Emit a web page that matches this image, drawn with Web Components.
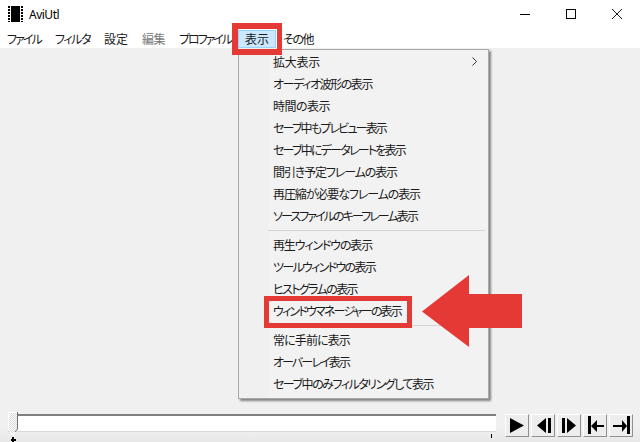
<!DOCTYPE html>
<html lang="ja">
<head>
<meta charset="utf-8">
<title>AviUtl</title>
<style>
  html, body { margin: 0; height: 100%; overflow: hidden; }
  body {
    font-family: "Noto Sans CJK JP", "Noto Sans", sans-serif;
    font-size: 12px;
    font-feature-settings: "palt";
    color: #1a1a1a;
  }
</style>
</head>
<body>
<aviutl-window>
  <title-bar slot="title">AviUtl</title-bar>
  <menu-bar slot="menu">
    <menu-top w="34">ファイル</menu-top>
    <menu-top w="35">フィルタ</menu-top>
    <menu-top w="24">設定</menu-top>
    <menu-top w="23" disabled>編集</menu-top>
    <menu-top w="52">プロファイル</menu-top>
    <menu-top w="24" open>表示</menu-top>
    <menu-top w="30">その他</menu-top>
  </menu-bar>
  <popup-menu slot="client">
    <menu-item w="47" arrow>拡大表示</menu-item>
    <menu-item w="99">オーディオ波形の表示</menu-item>
    <menu-item w="57">時間の表示</menu-item>
    <menu-item w="113">セーブ中もプレビュー表示</menu-item>
    <menu-item w="132">セーブ中にデータレートを表示</menu-item>
    <menu-item w="124">間引き予定フレームの表示</menu-item>
    <menu-item w="147">再圧縮が必要なフレームの表示</menu-item>
    <menu-item w="144">ソースファイルのキーフレーム表示</menu-item>
    <menu-sep></menu-sep>
    <menu-item w="99">再生ウィンドウの表示</menu-item>
    <menu-item w="102">ツールウィンドウの表示</menu-item>
    <menu-item w="84">ヒストグラムの表示</menu-item>
    <menu-item w="128" marked>ウィンドウマネージャーの表示</menu-item>
    <menu-sep></menu-sep>
    <menu-item w="77">常に手前に表示</menu-item>
    <menu-item w="76">オーバーレイ表示</menu-item>
    <menu-item w="160">セーブ中のみフィルタリングして表示</menu-item>
  </popup-menu>
  <red-arrow slot="client"></red-arrow>
  <seek-bar slot="footer"></seek-bar>
  <transport-buttons slot="footer"></transport-buttons>
</aviutl-window>

<script>
// small helper, every element just sets its shadow html once
class Base extends HTMLElement {
  constructor() {
    super();
    this.attachShadow({ mode: 'open' });
  }
  connectedCallback() {
    this.shadowRoot.innerHTML = this.html();
    this.fitText();
  }
  // the original menu font has narrow kana, squeeze each label to its width
  fitText() {
    const box = this.shadowRoot.querySelector('.label');
    const w = Number(this.getAttribute('w'));
    if (!box || !w) return;
    const n = this.textContent.trim().length;
    const spare = w - box.getBoundingClientRect().width;
    box.style.letterSpacing = (spare / n) + 'px';
  }
}

customElements.define('aviutl-window', class extends Base {
  html() {
    return `
      <style>
        :host { display: flex; flex-direction: column; width: 640px; height: 442px; background: #fff; }
        .client { flex: 1; position: relative; background: #f0f0f0; display: flex; flex-direction: column; justify-content: flex-end; }
        .footer { display: flex; align-items: flex-start; gap: 9px; padding: 0 7px 5px 8px; height: 23px;
                  background: linear-gradient(#f0f0f0, #f0f0f0 14px, #e8e8e8); }
      </style>
      <slot name="title"></slot>
      <slot name="menu"></slot>
      <div class="client">
        <slot name="client"></slot>
        <div class="footer"><slot name="footer"></slot></div>
      </div>`;
  }
});

customElements.define('title-bar', class extends Base {
  html() {
    return `
      <style>
        :host { display: flex; align-items: center; height: 30px; flex: none; font-family: "Noto Sans", sans-serif; font-size: 12px; font-feature-settings: normal; }
        .icon { margin-left: 8px; width: 15px; height: 16px; margin-right: 6px; margin-top: -2px; }
        .text { flex: 1; color: #000; letter-spacing: -.5px; margin-top: -1px; }
        .caption { width: 46px; height: 28px; align-self: flex-start; display: flex; align-items: center; justify-content: center; }
      </style>
      <svg class="icon" viewBox="0 0 15 16">
        <rect x="3" y="0" width="9" height="16" fill="#000"/>
        <path d="M1 0v16M14 0v16" stroke="#000" stroke-width="2" stroke-dasharray="2 1" fill="none"/>
      </svg>
      <span class="text"><slot></slot></span>
      <span class="caption"><svg width="10" height="10"><path d="M0 5.5h10" stroke="#000"/></svg></span>
      <span class="caption"><svg width="10" height="10"><rect x=".5" y=".5" width="9" height="9" fill="none" stroke="#000"/></svg></span>
      <span class="caption"><svg width="10" height="10"><path d="M0 0l10 10M10 0l-10 10" stroke="#000" stroke-width=".9"/></svg></span>`;
  }
});

customElements.define('menu-bar', class extends Base {
  html() {
    return `
      <style>
        :host { display: flex; height: 18px; flex: none; background: #fff; }
      </style>
      <slot></slot>`;
  }
});

customElements.define('menu-top', class extends Base {
  html() {
    return `
      <style>
        :host { display: block; position: relative; height: 18px; line-height: 18px; padding: 0 7px; white-space: nowrap; }
        :host([disabled]) { color: #7a7a7a; }
        :host([open]) { background: #cce8ff; box-shadow: inset 0 0 0 1px #99d1ff; z-index: 3; }
        :host([open])::after { content: ""; position: absolute; left: -6px; right: -6px; top: -7px; bottom: -7px;
                               border: solid #e53935; border-width: 6px 5px 6px 6px; pointer-events: none; }
        .label { display: inline-block; }
      </style>
      <span class="label"><slot></slot></span>`;
  }
});

customElements.define('popup-menu', class extends Base {
  html() {
    return `
      <style>
        :host { position: absolute; left: 238px; top: 1px; width: 249px; padding: 2px 0; display: block; z-index: 2;
                background: linear-gradient(90deg, #f0f0f0 30px, #f2f2f2 30px); border: 1px solid #a8a8a8;
                box-shadow: 2px 2px 2px rgba(0,0,0,.45); }
      </style>
      <slot></slot>`;
  }
});

customElements.define('menu-item', class extends Base {
  html() {
    const arrow = this.hasAttribute('arrow')
      ? '<svg class="arrow" width="5" height="9"><path d="M.5 .5l4 4-4 4" fill="none" stroke="#333"/></svg>'
      : '';
    return `
      <style>
        :host { display: flex; align-items: center; position: relative; box-sizing: border-box; height: 22px; padding: 0 0 4px 34px; white-space: nowrap; }
        .arrow { position: absolute; right: 11px; top: 5px; }
        .label { display: inline-block; }
        :host([marked])::after { content: ""; position: absolute; left: 25px; top: -5px; width: 138px; height: 22px;
                                 border: 5px solid #e53935; }
      </style>
      <span class="label"><slot></slot></span>${arrow}`;
  }
});

customElements.define('menu-sep', class extends Base {
  html() {
    return `
      <style>
        :host { display: block; height: 7px; padding-top: 2px; box-sizing: border-box; }
        div { height: 1px; margin-left: 29px; margin-right: 3px; background: #d5d5d5; }
      </style>
      <div></div>`;
  }
});

customElements.define('red-arrow', class extends Base {
  html() {
    return `
      <style>
        :host { position: absolute; left: 422px; top: 227px; width: 100px; height: 72px; display: block; z-index: 4; }
        svg { display: block; }
      </style>
      <svg width="100" height="72"><path d="M0 36.5L47 0V19H100V53H47V72Z" fill="#e53935"/></svg>`;
  }
});

customElements.define('seek-bar', class extends Base {
  html() {
    return `
      <style>
        :host { display: block; position: relative; width: 488px; height: 18px; box-sizing: border-box;
                background: #fff; border-top: 2px solid #808080; border-bottom: 1px solid #d8d8d8; }
        .thumb { position: absolute; left: 0; top: -4px; }
        .tick { position: absolute; top: 21px; width: 2px; height: 5px; background: #000; }
        .cross { position: absolute; left: 3px; top: 23px; width: 5px; height: 2px; background: #000; }
        .end { position: absolute; right: 4px; top: 18px; width: 1px; height: 4px; background: #000; }
      </style>
      <svg class="thumb" width="11" height="24" viewBox="0 0 11 24">
        <defs>
          <pattern id="dots" width="2" height="2" patternUnits="userSpaceOnUse">
            <rect width="2" height="2" fill="#fff"/>
            <rect width="1" height="1" fill="#d8d8d8"/>
            <rect x="1" y="1" width="1" height="1" fill="#d8d8d8"/>
          </pattern>
        </defs>
        <path d="M.5 .5H9.5V17L5 23 .5 17Z" fill="url(#dots)" stroke="#fff"/>
        <path d="M9.5 0V17L7 20" fill="none" stroke="#707070"/>
      </svg>
      <i class="tick" style="left:4px"></i>
      <i class="cross"></i>
      <i class="end"></i>`;
  }
});

customElements.define('transport-buttons', class extends Base {
  html() {
    const icons = [
      'M5 4L19 11.5 5 19Z',
      'M15 4V19L6 11.5ZM17 4h3v15h-3Z',
      'M5 4h3v15H5ZM10 4l9 7.5-9 7.5Z',
      'M5 2h3v18H5ZM8 12l6-6v5h7v2h-7v5Z',
      'M18 2h3v18h-3ZM18 12l-5-6v5H4v2h9v5Z'
    ];
    return `
      <style>
        :host { display: flex; gap: 2px; }
        svg { display: block; width: 24px; height: 23px; background: #ededed;
              box-sizing: border-box;
              border: 1px solid; border-color: #fff #909090 #909090 #fff; }
      </style>
      ${icons.map(d => `<svg viewBox="1 1 22 21"><path d="${d}" fill="#000"/></svg>`).join('')}`;
  }
});
</script>
</body>
</html>
